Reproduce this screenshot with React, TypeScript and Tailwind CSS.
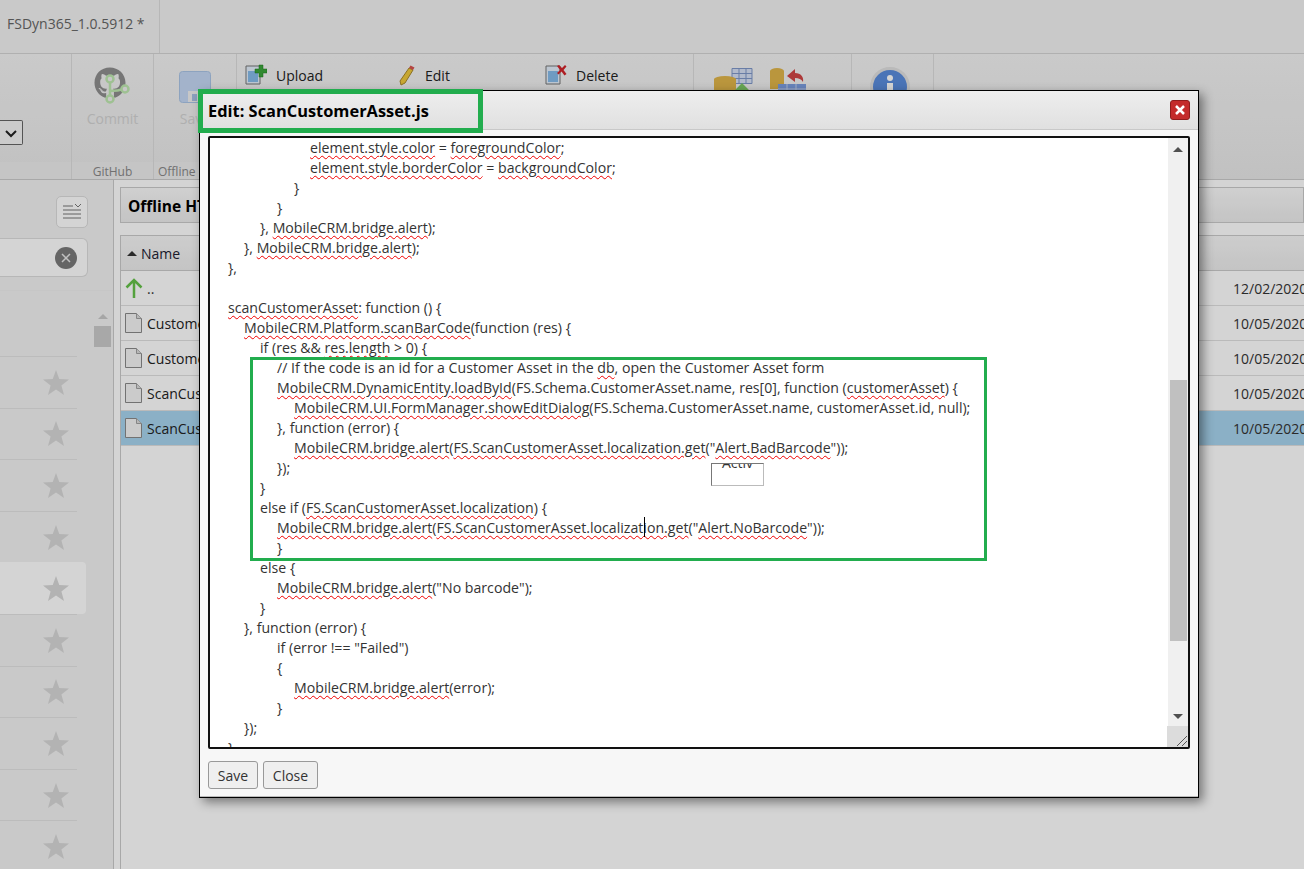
import { CSSProperties, ReactNode } from 'react'
import { FaGithub } from 'react-icons/fa'

const font = '"Open Sans", "Noto Sans", sans-serif'

// red wavy spell-check underline
function W({ children }: { children: ReactNode }) {
  return <span className="underline decoration-wavy decoration-[#f00000] decoration-1 underline-offset-2">{children}</span>
}

function FileIcon() {
  return (
    <svg width="17" height="20" viewBox="0 0 17 20" className="shrink-0">
      <path d="M.5.5h11l5 5v14H.5z" fill="#f4f4f4" stroke="#8a8a8a" />
      <path d="M11.5.5v5h5" fill="#dcdcdc" stroke="#a0a0a0" />
    </svg>
  )
}

function Star() {
  return (
    <svg width="26" height="25" viewBox="0 0 24 23">
      <path d="M12 0l3 8.200 9 .5-7 5.600 2.400 8.700L12 18l-7.400 5L7 14.300 0 8.700l9-.5z" fill="#d8d8d8" />
    </svg>
  )
}

function SmallDocIcon({ kind }: { kind: 'add' | 'del' }) {
  return (
    <svg width="22" height="22" viewBox="0 0 22 22">
      <path d="M1 2h14v18H1z" fill="#e4effa" stroke="#777" />
      <path d="M3 7h10v11H3z" fill="#86bbea" />
      {kind === 'add' ? (
        <path d="M10 5h4V1h4v4h4v4h-4v4h-4V9h-4z" fill="#3ba53b" stroke="#1f7a1f" strokeWidth=".5" />
      ) : (
        <path d="M12 2l2-1 3 3 3-3 1.500 1.500-3 3.500 3 4-2 1.500-3-4-3 3-1.500-1.500 3-3z" fill="#d2232a" />
      )}
    </svg>
  )
}

function Row({ name, date, active }: { name: string; date: string; active?: boolean }) {
  return (
    <div className={`flex h-[35px] items-center border-b border-[#e0e0e0] pl-1 ${active ? 'bg-[#a8d4ee]' : ''}`}>
      <FileIcon />
      <span className="ml-[5px] text-[14px] text-[#222]">{name}</span>
      <span className="ml-auto w-[71px] shrink-0 overflow-hidden text-[14px] whitespace-nowrap text-[#333]">{date}</span>
    </div>
  )
}

const Line = ({ i, children }: { i: number; children?: ReactNode }) => {
  const style: CSSProperties = { paddingLeft: i }
  return (
    <div className="h-5 whitespace-pre" style={style}>
      {children}
    </div>
  )
}

function GroupLabel({ children, className = '' }: { children: ReactNode; className?: string }) {
  return <div className={`mt-auto h-[17px] w-full bg-[#ededed] text-[12px] leading-[19px] text-[#888] ${className}`}>{children}</div>
}

function Background() {
  const rows = [0, 1, 2, 3, 4, 5, 6, 7, 8, 9]
  return (
    <div className="flex h-[869px] w-[1304px] flex-col overflow-hidden bg-white">
      <div className="flex h-[54px] shrink-0 border-b border-[#d4d4d4] bg-[#f2f2f2]">
        <div className="flex w-[160px] items-center border-r border-[#dcdcdc] pb-[6px] pl-[7px] text-[14px] text-[#666]">
          FSDyn365_1.0.5912 *
        </div>
      </div>
      <div className="flex h-[126px] shrink-0 border-b border-[#cbcbcb] bg-gradient-to-b from-[#f3f3f3] to-[#e9e9e9]">
        <div className="relative flex w-[72px] flex-col border-r border-[#dcdcdc]">
          <div className="absolute top-[66px] left-0 flex h-[25px] w-[23px] items-center justify-center rounded-r-[2px] border border-l-0 border-[#666] bg-[#f4f4f4]">
            <svg width="12" height="12" viewBox="0 0 12 12">
              <path d="M1 4l5 5 5-5" fill="none" stroke="#222" strokeWidth="2" />
            </svg>
          </div>
          <GroupLabel />
        </div>
        <div className="flex w-[82px] flex-col items-center border-r border-[#dcdcdc] pt-[13px]">
          <div className="relative h-[40px] w-[38px]">
            <FaGithub className="absolute top-0 left-0 text-[#8e8e8e]" size={32} />
            {/* green branch drawn over the logo */}
            <svg width="38" height="40" viewBox="0 0 38 40" className="absolute top-0 left-0">
              <path d="M16 14v16M16 24c3 0 8 0 14-2" fill="none" stroke="#bfe8b0" strokeWidth="2.500" />
              <circle cx="16" cy="12" r="3.500" fill="#f0f0f0" stroke="#bfe8b0" strokeWidth="2.500" />
              <circle cx="16" cy="32" r="3.500" fill="#f0f0f0" stroke="#bfe8b0" strokeWidth="2.500" />
              <circle cx="31" cy="22" r="3.500" fill="#f0f0f0" stroke="#bfe8b0" strokeWidth="2.500" />
            </svg>
          </div>
          <span className="mt-[1px] text-[14px] text-[#d3d3d3]">Commit</span>
          <GroupLabel className="text-center">GitHub</GroupLabel>
        </div>
        <div className="flex w-[83px] flex-col items-center border-r border-[#dcdcdc] pt-[17px]">
          <svg width="32" height="32" viewBox="0 0 32 32">
            <rect x=".5" y=".5" width="31" height="31" rx="3" fill="#c4d8f4" stroke="#aac4e6" />
            <path d="M9 20h14v11H9z" fill="#f0f0f0" />
            <path d="M13 23h5v7h-5z" fill="#a8c0e4" />
          </svg>
          <span className="mt-[5px] text-[14px] text-[#d3d3d3]">Save</span>
          <GroupLabel className="pl-[4px]">Offline</GroupLabel>
        </div>
        <div className="flex w-[457px] items-start gap-[3px] border-r border-[#dcdcdc] pt-[10px] pl-2">
          <div className="flex w-[150px] items-center gap-[9px] text-[14px] text-[#222]">
            <SmallDocIcon kind="add" />
            Upload
          </div>
          <div className="flex w-[144px] items-center gap-[9px] text-[14px] text-[#222]">
            <svg width="18" height="22" viewBox="0 0 18 22">
              <path d="M11 4l4 2-8 13-4 2-1-4z" fill="#f0c93c" stroke="#a8882a" />
              <path d="M11 4l1.500-2.500 4 2L15 6z" fill="#d9534f" />
            </svg>
            Edit
          </div>
          <div className="flex items-center gap-[9px] text-[14px] text-[#222]">
            <SmallDocIcon kind="del" />
            Delete
          </div>
        </div>
        <div className="flex w-[158px] gap-[16px] border-r border-[#dcdcdc] pt-[14px] pl-[20px]">
          <svg width="40" height="34" viewBox="0 0 40 34">
            <path d="M18 .5h20v15H18z" fill="#d6e0f4" stroke="#7f97c8" />
            <path d="M18 5.500h20M18 10.500h20M25 .5v15M32 .5v15" stroke="#7f97c8" />
            <path d="M0 11a11 3 0 0 1 22 0v23H0z" fill="#e0b54a" />
            <path d="M28 15l7 7h-4v8h-6v-8h-4z" fill="#7cc864" />
          </svg>
          <svg width="36" height="34" viewBox="0 0 36 34">
            <path d="M0 3a7 3 0 0 1 14 0v18H0z" fill="#e0b54a" />
            <path d="M17 8l8-7v4c6 0 9 4 8 9-2-3-4-4-8-4v4z" fill="#d04545" />
            <path d="M8 16h28v14H8z" fill="#7c9ee0" />
            <path d="M8 21h28M17 16v14M26 16v14" stroke="#c4d4f0" />
          </svg>
        </div>
        <div className="w-[82px] border-r border-[#dcdcdc] pt-[13px] pl-[18px]">
          <svg width="40" height="40" viewBox="0 0 40 40">
            <circle cx="20" cy="20" r="18.500" fill="#5a8cdc" stroke="#e0e0e0" strokeWidth="3" />
            <circle cx="20" cy="11" r="3" fill="#fff" />
            <path d="M17 16h6v13h-6z" fill="#fff" />
          </svg>
        </div>
      </div>
      <div className="flex min-h-0 flex-1 bg-white">
        <div className="relative flex w-[114px] shrink-0 flex-col overflow-hidden border-r border-[#cbcbcb] bg-[#f2f2f2]">
          <div className="flex justify-end pt-[16px] pr-[25px]">
            <div className="flex h-[32px] w-[32px] items-center justify-center rounded-[5px] border border-[#dcdcdc] bg-white">
              <svg width="20" height="18" viewBox="0 0 20 18">
                <path d="M1 3h10M1 7h18M1 11h18M1 15h18M13 1l3 3 3-3" fill="none" stroke="#777" />
              </svg>
            </div>
          </div>
          <div className="mt-[10px] mr-[25px] flex h-[39px] shrink-0 items-center justify-end rounded-r-[6px] border border-l-0 border-[#dcdcdc] bg-white pr-[10px]">
            <div className="flex h-[22px] w-[22px] items-center justify-center rounded-full bg-[#7a7a7a]">
              <svg width="10" height="10" viewBox="0 0 10 10">
                <path d="M1 1l8 8M9 1l-8 8" stroke="#e8e8e8" strokeWidth="1.500" />
              </svg>
            </div>
          </div>
          <div className="mt-[13px] flex shrink-0 flex-col border-t border-[#eeeeee] pt-[65px]">
            {rows.map((r) => (
              <div
                key={r}
                className={`flex h-[51.6px] shrink-0 items-center justify-end pr-[8px] ${
                  r === 4 ? 'w-[86px] rounded-r-[4px] bg-white pr-[17px]' : 'w-[77px] border-t border-[#e2e2e2]'
                }`}
              >
                <Star />
              </div>
            ))}
          </div>
          <div className="absolute top-[134px] right-[2px] flex w-[17px] flex-col items-center">
            <div className="h-0 w-0 border-x-[5px] border-b-[5px] border-x-transparent border-b-[#c8c8c8]" />
            <div className="mt-[7px] h-[21px] w-[17px] bg-[#cbcbcb]" />
          </div>
        </div>
        <div className="flex flex-1 flex-col pt-[7px] pl-[6px]">
          <div className="flex h-[36px] shrink-0 items-center border border-[#cbcbcb] bg-gradient-to-b from-[#fafafa] to-[#ececec] pt-[3px] pl-[7px] text-[15.5px] font-bold text-black">
            Offline HTML
          </div>
          <div className="mt-3 flex-1 border-t border-l border-[#cbcbcb] bg-white">
            <div className="flex h-[35px] items-center border-b border-[#cbcbcb] bg-gradient-to-b from-[#f7f7f7] to-[#ececec] pl-[6px] text-[14px] text-[#223]">
              <span className="mr-1 h-0 w-0 border-x-[5px] border-b-[5px] border-x-transparent border-b-[#333]" />
              Name
            </div>
            <div className="flex h-[35px] items-center border-b border-[#e0e0e0] pl-1">
              <svg width="18" height="21" viewBox="0 0 18 21">
                <path d="M9 20V2M1.500 9.500L9 2l7.500 7.500" fill="none" stroke="#66c24a" strokeWidth="2.500" />
              </svg>
              <span className="ml-1 text-[14px] text-[#333]">..</span>
              <span className="ml-auto w-[71px] shrink-0 overflow-hidden text-[14px] whitespace-nowrap text-[#333]">12/02/2020</span>
            </div>
            <Row name="CustomerAsset.html" date="10/05/2020" />
            <Row name="CustomerAsset.js" date="10/05/2020" />
            <Row name="ScanCustomerAsset.html" date="10/05/2020" />
            <Row name="ScanCustomerAsset.js" date="10/05/2020" active />
          </div>
        </div>
      </div>
    </div>
  )
}

function Editor() {
  return (
    <div className="relative h-[613px] overflow-hidden rounded-[2px] border-2 border-[#111] bg-white">
      <div className="h-full overflow-hidden pr-[22px] text-[14.15px] leading-5 text-[#333]">
        <Line i={100}><W>element.style.color</W> = <W>foregroundColor</W>;</Line>
        <Line i={100}><W>element.style.borderColor</W> = <W>backgroundColor</W>;</Line>
        <Line i={84}>{'}'}</Line>
        <Line i={67}>{'}'}</Line>
        <Line i={50}>{'}, '}<W>MobileCRM.bridge.alert</W>);</Line>
        <Line i={34}>{'}, '}<W>MobileCRM.bridge.alert</W>);</Line>
        <Line i={18}>{'},'}</Line>
        <Line i={18} />
        <Line i={18}><W>scanCustomerAsset</W>: function () {'{'}</Line>
        <Line i={34}><W>MobileCRM.Platform.scanBarCode</W>(function (res) {'{'}</Line>
        <Line i={50}>if (res &amp;&amp; <W>res.length</W> &gt; 0) {'{'}</Line>
        <Line i={67}>// If the code is an id for a Customer Asset in the <W>db</W>, open the Customer Asset form</Line>
        <Line i={67}><W>MobileCRM.DynamicEntity.loadById</W>(FS.Schema.CustomerAsset.name, res[0], function (<W>customerAsset</W>) {'{'}</Line>
        <Line i={84}><W>MobileCRM.UI.FormManager.showEditDialog</W>(FS.Schema.CustomerAsset.name, customerAsset.id, null);</Line>
        <Line i={67}>{'}, function (error) {'}</Line>
        <Line i={84}><W>MobileCRM.bridge.alert</W>(<W>FS.ScanCustomerAsset.localization.get</W>("<W>Alert.BadBarcode</W>"));</Line>
        <Line i={67}>{'});'}</Line>
        <Line i={50}>{'}'}</Line>
        <Line i={50}>else if (<W>FS.ScanCustomerAsset.localization</W>) {'{'}</Line>
        <Line i={67}><W>MobileCRM.bridge.alert</W>(<W>FS.ScanCustomerAsset.localization.get</W>("<W>Alert.NoBarcode</W>"));</Line>
        <Line i={67}>{'}'}</Line>
        <Line i={50}>else {'{'}</Line>
        <Line i={67}><W>MobileCRM.bridge.alert</W>("No barcode");</Line>
        <Line i={50}>{'}'}</Line>
        <Line i={34}>{'}, function (error) {'}</Line>
        <Line i={67}>if (error !== "Failed")</Line>
        <Line i={67}>{'{'}</Line>
        <Line i={84}><W>MobileCRM.bridge.alert</W>(error);</Line>
        <Line i={67}>{'}'}</Line>
        <Line i={34}>{'});'}</Line>
        <Line i={18}>{'}'}</Line>
      </div>
      {/* scrollbar */}
      <div className="absolute top-0 right-0 bottom-[20px] flex w-[20px] flex-col items-center bg-[#f0f0f0] pt-[9px] pb-[8px]">
        <div className="h-0 w-0 border-x-[5px] border-b-[5px] border-x-transparent border-b-[#505050]" />
        <div className="mt-[228px] h-[261px] w-[17px] bg-[#c0c0c0]" />
        <div className="mt-auto h-0 w-0 border-x-[5px] border-t-[5px] border-x-transparent border-t-[#505050]" />
      </div>
      <div className="absolute right-0 bottom-0 h-[21px] w-[21px] bg-[#dcdcdc]">
        <svg width="21" height="21" viewBox="0 0 21 21">
          <path d="M10 20L20 10M15 20l5-5" stroke="#555" fill="none" />
        </svg>
      </div>
      {/* stray tooltip stub, its text is clipped at the top */}
      <div className="absolute top-[325px] left-[501px] h-[23px] w-[53px] overflow-hidden border border-[#777] border-r-[#bbb] border-b-[#bbb] bg-white text-center text-[14px] leading-[14px] text-[#333]">
        <span className="block -translate-y-[8px]">Activ</span>
      </div>
      {/* caret */}
      <div className="absolute top-[379px] left-[434px] h-[20px] w-px bg-black" />
    </div>
  )
}

export default function App() {
  return (
    <div className="relative h-[869px] w-[1304px] overflow-hidden" style={{ fontFamily: font }}>
      <Background />
      <div className="absolute inset-0 bg-black/[0.17]" />
      <div className="absolute top-[90px] left-[199px] flex h-[708px] w-[1000px] flex-col border border-black bg-[#f7f7f7] shadow-[4px_4px_10px_rgba(0,0,0,0.45)]">
        <div className="flex h-[39px] shrink-0 items-center justify-between border-b border-[#c8c8c8] bg-gradient-to-b from-[#eeeeee] to-[#e0e0e0] px-[8px]">
          <span className="pt-[3px] text-[16.4px] font-bold text-black">Edit: ScanCustomerAsset.js</span>
          <button className="flex h-5 w-5 items-center justify-center rounded-[3px] border border-[#8f1c1c] bg-[#c42b2b]">
            <svg width="12" height="12" viewBox="0 0 12 12">
              <path d="M2 2l8 8M10 2l-8 8" stroke="#fff" strokeWidth="2.500" />
            </svg>
          </button>
        </div>
        <div className="px-[8px] pt-[6px]">
          <Editor />
        </div>
        <div className="flex flex-1 gap-[5px] border-b border-[#bbbbbb] px-[8px] pt-[12px]">
          <button className="h-[28px] w-[50px] rounded-[3px] border border-[#999] bg-[#efefef] text-[14px] text-[#333]">Save</button>
          <button className="h-[28px] w-[55px] rounded-[3px] border border-[#999] bg-[#efefef] text-[14px] text-[#333]">Close</button>
        </div>
      </div>
      {/* green annotation boxes */}
      <div className="absolute top-[89px] left-[198px] h-[44px] w-[285px] border-[5px] border-[#22ad4e]" />
      <div className="absolute top-[357px] left-[250px] h-[204px] w-[737px] border-[3px] border-[#22ad4e]" />
    </div>
  )
}
